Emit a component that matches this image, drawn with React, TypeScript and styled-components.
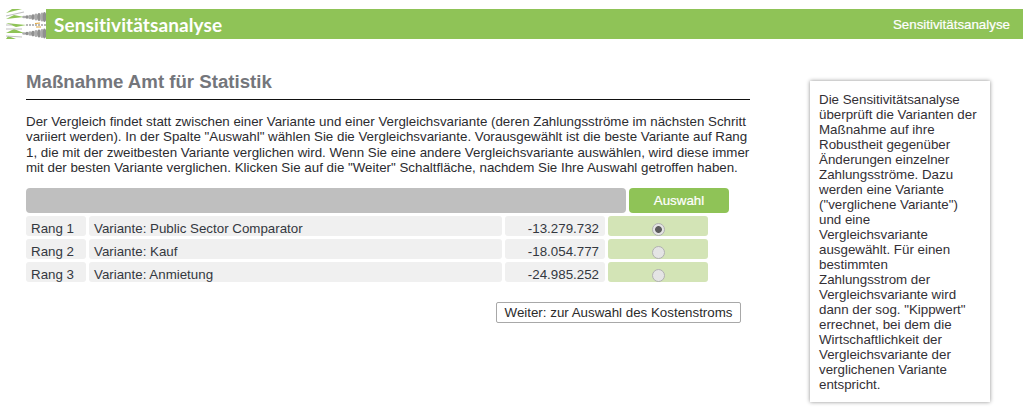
import React from "react";
import styled, { createGlobalStyle } from "styled-components";

const Global = createGlobalStyle`
  html, body { margin: 0; padding: 0; background: #fff; }
  body { font-family: "Liberation Sans", Arial, sans-serif; font-size: 13.33px; color: #2b2b2b; }
`;
const Page = styled.div`
  width: 1023px; height: 415px; overflow: hidden; padding-top: 9px; box-sizing: border-box;
`;
const Header = styled.header`
  display: flex; align-items: center; height: 30px; margin-left: 6px; background: #8fc357; color: #fff;
`;
const Brand = styled.div`
  font-family: Lato, sans-serif; font-weight: 700; font-size: 19px; margin-left: 8px; flex: 1; letter-spacing: 0.1px;
`;
const HeaderLink = styled.div`
  font-size: 13.33px; margin-right: 13px; -webkit-text-stroke: 0.2px #fff;
`;
const Body = styled.div`
  display: flex; align-items: flex-start; padding-left: 26px; margin-top: 32px;
`;
const Main = styled.main`
  width: 724px;
`;
const Title = styled.h1`
  margin: 0; font-size: 18.65px; line-height: 22px; font-weight: 700; color: #74767b; padding-bottom: 6px;
  border-bottom: 1px solid #111;
`;
const Intro = styled.p`
  margin: 14px 0 0; font-size: 13.33px; line-height: 15.25px; color: #2c2c30; width: 724px;
`;
const TableHead = styled.div`
  display: flex; gap: 3px; margin-top: 13px;
`;
const HeadBar = styled.div`
  width: 600px; height: 25px; border-radius: 4px; background: #bfbfbf;
`;
const HeadCell = styled.div`
  width: 100px; height: 25px; border-radius: 4px; background: #8fc357; color: #fff;
  display: flex; align-items: center; justify-content: center; font-size: 13.33px; -webkit-text-stroke: 0.2px #fff;
`;
const Rows = styled.div`
  display: flex; flex-direction: column; gap: 3px; margin-top: 3px;
`;
const Row = styled.div`
  display: flex; gap: 3px; height: 20px;
`;
const Cell = styled.div<{ $w: number; $right?: boolean }>`
  width: ${p => p.$w}px; box-sizing: border-box; padding: 5px 6px 0 5px;
  background: #f0f0f0; border-radius: 3px; line-height: 15px; white-space: nowrap; color: #34383f;
  text-align: ${p => (p.$right ? "right" : "left")};
`;
const RadioCell = styled.div`
  width: 100px; background: #d3e4b6; border-radius: 3px; display: flex; justify-content: center; align-items: flex-start;
  padding-top: 7px; box-sizing: border-box; overflow: hidden;
`;
const Radio = styled.span<{ $on?: boolean }>`
  width: 13px; height: 13px; box-sizing: border-box; border-radius: 50%; flex: none; margin-left: 1px;
  background: ${p => (p.$on ? "radial-gradient(circle, #5c5c5c 0 3px, #e4e4e4 3.8px)" : "#e4e4e4")};
  border: 1.5px solid #b0b0b0;
`;
const Actions = styled.div`
  display: flex; justify-content: flex-end; margin-top: 20px; padding-right: 9px;
`;
const Button = styled.button`
  height: 21px; width: 245px; padding: 0; box-sizing: border-box; background: #fff; border: 1px solid #a8a8a8; border-radius: 2px;
  font-family: "Liberation Sans", Arial, sans-serif; font-size: 13.33px; color: #2b2b2b;
`;
const Aside = styled.aside`
  width: 180px; box-sizing: border-box; margin: 10px 0 0 60px; padding: 11px 12px 10px 9px; background: #fff;
  box-shadow: 0 0 4px rgba(0,0,0,0.45); font-size: 13.33px; line-height: 15px; color: #332f35;
`;

const Logo = () => (
  <svg width="40" height="30" viewBox="0 0 40 30" style={{ flex: "none", background: "#fff" }}>
    <path d="M0 4 L16 0 L6 0 Z M0 10 L18 8 L8 6 Z M0 14 L20 16 L10 18 Z M0 24 L18 24 L8 20 Z M0 30 L10 30 L2 27 Z" fill="#8fc357" />
    <path d="M0 7 L18 3 M0 20 L16 20 M0 27 L16 28 M0 16 L6 16" stroke="#c0c0c0" strokeWidth="1.1" />
    {[[8, 1], [24.5, 1]].map(([y, s]) =>
      [18, 21, 24, 27, 30, 33, 36, 38.5].map((x, i) => (
        <ellipse key={`${y}-${x}`} cx={x} cy={y} rx="1.8" ry={(1.2 + i * 0.55) * s} fill={i % 2 ? "#8f8f8f" : "#ababab"} />
      ))
    )}
    <path d="M20 16 H40" stroke="#a0a0a0" strokeWidth="1.6" strokeDasharray="2 1" />
    <path d="M29 14.5 L34 14 M30 18 L35 18" stroke="#e2a53c" strokeWidth="1.1" />
  </svg>
);

const data = [
  ["Rang 1", "Variante: Public Sector Comparator", "-13.279.732", true],
  ["Rang 2", "Variante: Kauf", "-18.054.777", false],
  ["Rang 3", "Variante: Anmietung", "-24.985.252", false],
] as const;

export default function App() {
  return (
    <Page>
      <Global />
      <Header>
        <Logo />
        <Brand>Sensitivitätsanalyse</Brand>
        <HeaderLink>Sensitivitätsanalyse</HeaderLink>
      </Header>
      <Body>
        <Main>
          <Title>Maßnahme Amt für Statistik</Title>
          <Intro>
            Der Vergleich findet statt zwischen einer Variante und einer Vergleichsvariante (deren Zahlungsströme im nächsten Schritt
            variiert werden). In der Spalte "Auswahl" wählen Sie die Vergleichsvariante. Vorausgewählt ist die beste Variante auf Rang
            1, die mit der zweitbesten Variante verglichen wird. Wenn Sie eine andere Vergleichsvariante auswählen, wird diese immer
            mit der besten Variante verglichen. Klicken Sie auf die "Weiter" Schaltfläche, nachdem Sie Ihre Auswahl getroffen haben.
          </Intro>
          <TableHead>
            <HeadBar />
            <HeadCell>Auswahl</HeadCell>
          </TableHead>
          <Rows>
            {data.map(([rank, name, value, on]) => (
              <Row key={rank}>
                <Cell $w={60}>{rank}</Cell>
                <Cell $w={413}>{name}</Cell>
                <Cell $w={100} $right>{value}</Cell>
                <RadioCell><Radio $on={on} /></RadioCell>
              </Row>
            ))}
          </Rows>
          <Actions>
            <Button>Weiter: zur Auswahl des Kostenstroms</Button>
          </Actions>
        </Main>
        <Aside>
          Die Sensitivitätsanalyse überprüft die Varianten der Maßnahme auf ihre Robustheit gegenüber Änderungen einzelner Zahlungsströme. Dazu werden eine Variante ("verglichene Variante") und eine Vergleichsvariante ausgewählt. Für einen bestimmten Zahlungsstrom der Vergleichsvariante wird dann der sog. "Kippwert" errechnet, bei dem die Wirtschaftlichkeit der Vergleichsvariante der verglichenen Variante entspricht.
        </Aside>
      </Body>
    </Page>
  );
}
